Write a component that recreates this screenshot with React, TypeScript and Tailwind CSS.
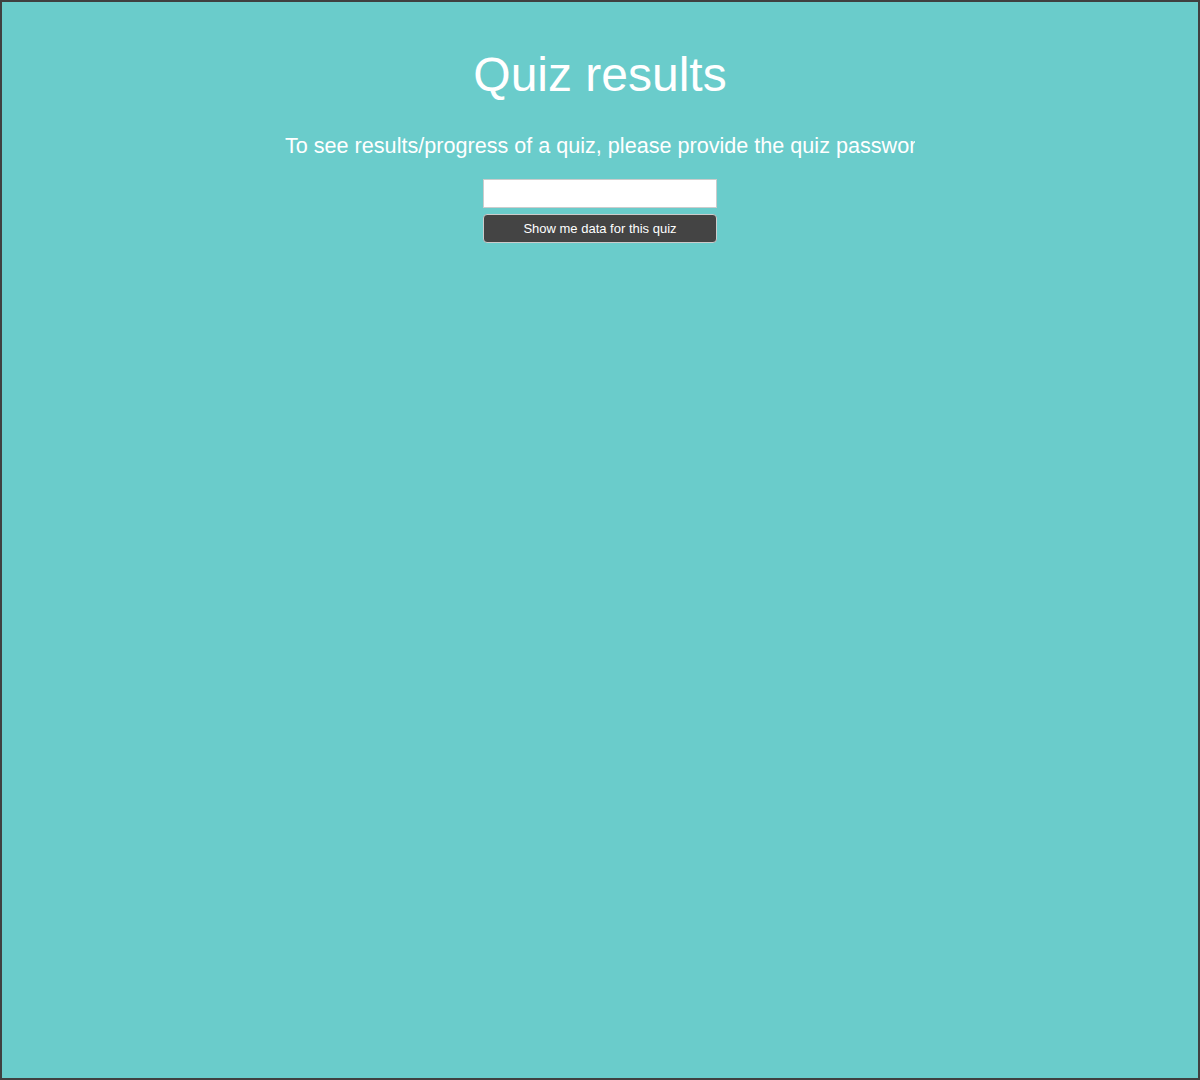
import React from "react";

export default function App() {
  return (
    <div
      className="w-[1200px] h-[1080px] border-2 border-[#404040] bg-[#6acccb] flex flex-col items-center text-white"
      style={{ fontFamily: '"Liberation Sans", Arial, sans-serif' }}
    >
      <h1 className="mt-[45px] text-[48px] leading-[55px] font-normal">Quiz results</h1>
      <div className="mt-[31px] w-[630px] overflow-hidden whitespace-nowrap text-[21.6px] leading-[25px]">
        To see results/progress of a quiz, please provide the quiz password.
      </div>
      <input
        type="text"
        className="mt-[21px] w-[234px] h-[29px] bg-white border border-[#cccccc] outline-none text-black px-1"
      />
      <button className="mt-[6px] w-[234px] h-[29px] bg-[#444444] border border-[#cccccc] rounded-[4px] text-white text-[13px]">
        Show me data for this quiz
      </button>
    </div>
  );
}
